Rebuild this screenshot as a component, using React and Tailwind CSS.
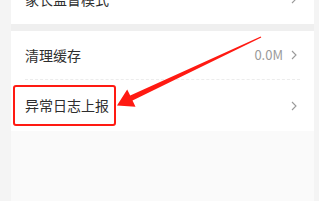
import React from 'react';

const Chevron = () => (
  <svg width="6" height="10" viewBox="0 0 6 10" className="shrink-0">
    <path d="M1 1 L5 5 L1 9" fill="none" stroke="#9a9a9a" strokeWidth="1.1" />
  </svg>
);

const Row = ({ label, value, boxed, h }) => (
  <div className={`${h} flex items-center pl-[14px] pr-[17px]`}>
    <div
      className={
        boxed
          ? 'ml-[-12px] pl-[10px] pr-[4px] h-[41px] w-[103px] flex items-center border-[2.5px] border-[#ff1a12] rounded-[3px]'
          : 'flex items-center'
      }
    >
      <span className="text-[14px] text-[#2e2e2e]">{label}</span>
    </div>
    <div className="flex-1" />
    {value && <span className="text-[13px] text-[#9a9a9a] mr-[8px]">{value}</span>}
    <Chevron />
  </div>
);

const App = () => {
  return (
    <div
      className="relative w-[319px] h-[201px] overflow-hidden bg-[#f4f4f4] flex"
      style={{ fontFamily: '"Noto Sans CJK SC", "Noto Sans", sans-serif' }}
    >
      <div className="ml-[11px] w-[303px] bg-[#fafafa] flex flex-col">
        <div className="mt-[-26px] bg-white">
          <Row label="家长监督模式" h="h-[50px]" />
        </div>
        <div className="h-[7px] bg-[#efefef]" />
        <div className="bg-white">
          <Row label="清理缓存" value="0.0M" h="h-[48px]" />
          <div className="mx-[14px] border-t border-dashed border-[#ececec]" />
          <Row label="异常日志上报" boxed h="h-[51px]" />
        </div>
      </div>

      {/* annotation arrow */}
      <svg className="absolute left-0 top-0" width="319" height="201" viewBox="0 0 319 201">
        <polygon
          points="261.3,37.4 132.5,100.6 135.5,106.8 117,105.5 127.2,89.6 130.2,95.6 260.7,36.6"
          fill="#ff1a12"
        />
      </svg>
    </div>
  );
};

export default App;
